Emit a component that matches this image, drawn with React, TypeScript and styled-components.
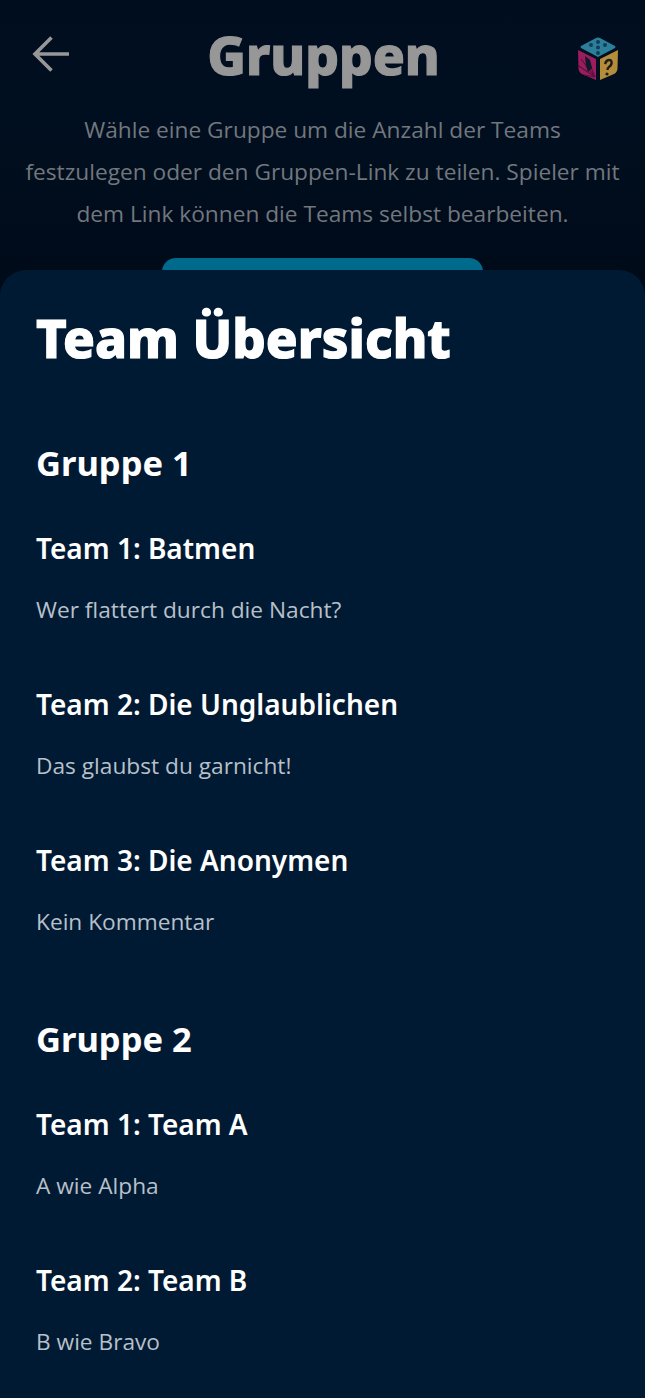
import React from 'react'
import styled, { createGlobalStyle } from 'styled-components'

const GlobalStyle = createGlobalStyle`
  html, body {
    margin: 0;
    padding: 0;
    background: #000e1f;
  }
  body {
    font-family: "Open Sans", "Noto Sans", sans-serif;
  }
`

const groups = [
  {
    name: 'Gruppe 1',
    teams: [
      { title: 'Team 1: Batmen', text: 'Wer flattert durch die Nacht?' },
      { title: 'Team 2: Die Unglaublichen', text: 'Das glaubst du garnicht!' },
      { title: 'Team 3: Die Anonymen', text: 'Kein Kommentar' },
    ],
  },
  {
    name: 'Gruppe 2',
    teams: [
      { title: 'Team 1: Team A', text: 'A wie Alpha' },
      { title: 'Team 2: Team B', text: 'B wie Bravo' },
    ],
  },
]

const BackIcon = () => (
  <BackSvg width="38" height="38" viewBox="0 0 38 38" fill="none" stroke="#979797" strokeWidth="3.6">
    <path d="M37 19H4M19.5 2.5L3 19L19.5 35.5" />
  </BackSvg>
)

const DiceLogo = () => (
  <LogoSvg width="42" height="44" viewBox="0 0 42 44">
    <path d="M21 0.5Q22 0.5 23 1L38 9Q39 10 38 11L21 20L4 11Q3 10 4 9L19 1Q20 0.5 21 0.5Z" fill="#2b7f9b" />
    <path d="M1 13L19 22V43L5 37Q1.5 35 1.5 31Z" fill="#9c1c5e" />
    <g stroke="#5c1240" strokeWidth="1.2">
      <path d="M18 40L4 22M18 40L2 29M18 40L7 38M18 40L11 23" />
    </g>
    <path d="M41 13L23 22V43L37 37Q40.5 35 40.5 31Z" fill="#b58d3a" />
    <g fill="#123f55">
      <circle cx="21" cy="5" r="2" />
      <circle cx="14" cy="8" r="2" />
      <circle cx="21" cy="10.5" r="2" />
      <circle cx="28" cy="8" r="2" />
      <circle cx="21" cy="16" r="2" />
    </g>
    <path d="M8 19L13 23L15 31L11 35L9 29Z" fill="#0b1a2c" />
    <path d="M28 27Q30 21.5 34 23.5Q36 27 32 30Q30.5 31 30.5 33" fill="none" stroke="#1c1c1c" strokeWidth="2.4" />
    <circle cx="30" cy="37" r="1.6" fill="#1c1c1c" />
  </LogoSvg>
)

export default function App() {
  return (
    <>
      <GlobalStyle />
      <Page>
        <Header>
          <BackIcon />
          <PageTitle>Gruppen</PageTitle>
          <DiceLogo />
        </Header>
        <Intro>
          Wähle eine Gruppe um die Anzahl der Teams festzulegen oder den Gruppen-Link zu teilen.
          Spieler mit dem Link können die Teams selbst bearbeiten.
        </Intro>
        <HiddenButton />
        <Sheet>
          <SheetTitle>Team Übersicht</SheetTitle>
          {groups.map(group => (
            <Group key={group.name}>
              <GroupName>{group.name}</GroupName>
              {group.teams.map(team => (
                <Team key={team.title}>
                  <TeamName>{team.title}</TeamName>
                  <TeamText>{team.text}</TeamText>
                </Team>
              ))}
            </Group>
          ))}
        </Sheet>
      </Page>
    </>
  )
}

const Page = styled.div`
  width: 645px;
  height: 1398px;
  overflow: hidden;
  background: linear-gradient(#000d1e 0, #000f20 100px, #000b1a 270px);
`

const Header = styled.header`
  display: flex;
  align-items: center;
  justify-content: space-between;
  padding: 33px 26px 0 32px;
  height: 44px;
`

const BackSvg = styled.svg`
  margin-bottom: 3px;
`

const LogoSvg = styled.svg`
  margin-top: 8px;
`

const PageTitle = styled.h1`
  margin: 0;
  font-family: "Noto Sans", sans-serif;
  font-weight: 800;
  font-size: 53px;
  line-height: 44px;
  color: #979797;
  -webkit-text-stroke: 1.2px #979797;
`

const Intro = styled.p`
  margin: 32px auto 0;
  width: 600px;
  font-size: 22.7px;
  line-height: 42px;
  text-align: center;
  color: #72777d;
`

const HiddenButton = styled.div`
  width: 321px;
  height: 40px;
  margin: 23px auto 0;
  border-radius: 14px 14px 0 0;
  background: #006a8c;
`

const Sheet = styled.main`
  position: relative;
  margin-top: -28px;
  min-height: 1128px;
  padding: 44px 36px 0;
  border-radius: 26px 26px 0 0;
  background: #001a33;
`

const SheetTitle = styled.h2`
  margin: 0;
  font-family: "Noto Sans", sans-serif;
  font-weight: 800;
  font-size: 52.6px;
  line-height: 48px;
  color: #fff;
  -webkit-text-stroke: 1.2px #fff;
`

const Group = styled.section`
  margin-top: 79px;
`

const GroupName = styled.h3`
  margin: 0;
  font-family: "Noto Sans", sans-serif;
  font-weight: 700;
  font-size: 34.5px;
  line-height: 44px;
  color: #fff;
`

const Team = styled.div`
  margin-top: 43px;
  & + & {
    margin-top: 58px;
  }
`

const TeamName = styled.h4`
  margin: 0;
  font-family: "Noto Sans", sans-serif;
  font-weight: 600;
  font-size: 28px;
  line-height: 40px;
  color: #fff;
`

const TeamText = styled.p`
  margin: 26px 0 0;
  font-size: 22.7px;
  line-height: 32px;
  color: #b8c0ca;
`
